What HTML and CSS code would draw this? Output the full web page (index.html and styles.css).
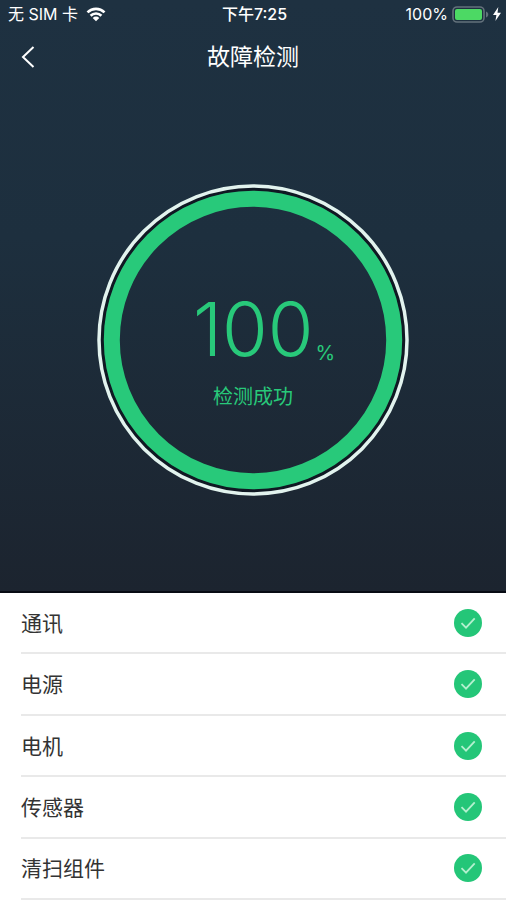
FILE: index.html
```html
<!DOCTYPE html>
<html lang="zh-CN">
<head>
<meta charset="utf-8">
<meta name="viewport" content="width=device-width, initial-scale=1">
<title>故障检测</title>
<link rel="stylesheet" href="styles.css">
</head>
<body>
<svg class="defs" aria-hidden="true">
  <symbol id="check" viewBox="0 0 28 28">
    <circle cx="14" cy="14" r="14" fill="#24c678"/>
    <path d="M7.500 14.200 12 18.700 20.700 9.300" fill="none" stroke="#b4f0cf" stroke-width="1.800"/>
  </symbol>
</svg>
<main class="screen">
  <section class="hero">
    <div class="status">
      <div class="status-left">
        <span>无 SIM 卡</span>
        <svg class="wifi" viewBox="0 0 20 15" aria-hidden="true">
          <path d="M1.5 5.4a12.2 12.2 0 0 1 17 0M4.6 8.7a7.7 7.7 0 0 1 10.8 0" fill="none" stroke="#fff" stroke-width="2.7"/>
          <path d="M6.7 10.9a4.7 4.7 0 0 1 6.6 0L10 14.3z" fill="#fff"/>
        </svg>
      </div>
      <span class="time">下午7:25</span>
      <div class="status-right">
        <span>100%</span>
        <svg class="battery" viewBox="0 0 37 17" aria-hidden="true">
          <rect x="1" y="1" width="31" height="15" rx="4" fill="none" stroke="#63717b" stroke-width="1.6"/>
          <rect x="3" y="3" width="27" height="11" rx="2" fill="#4cd964"/>
          <path d="M34 5.5c3 1 3 5 0 6z" fill="#63717b"/>
        </svg>
        <svg class="bolt" viewBox="0 0 8 14" aria-hidden="true"><path d="M5.3 0 0 8h3.4l-1 6L8 5.7H4.5z" fill="#fff"/></svg>
      </div>
    </div>
    <header class="nav">
      <button class="back" type="button" aria-label="返回">
        <svg viewBox="0 0 14 22" aria-hidden="true"><path d="M12.500 1 2 11l10.500 10" fill="none" stroke="#fff" stroke-width="2"/></svg>
      </button>
      <h1>故障检测</h1>
    </header>
    <div class="gauge">
      <svg class="ring" viewBox="0 0 312 312" aria-hidden="true">
        <circle cx="156" cy="156" r="151" fill="none" stroke="#101823" stroke-width="4"/>
        <circle cx="156" cy="156" r="154" fill="none" stroke="#e2f3ee" stroke-width="3.500"/>
        <circle cx="156" cy="156" r="141.200" fill="none" stroke="#28c97a" stroke-width="16"/>
      </svg>
      <div class="reading">
        <p class="value"><span>100</span><span class="unit">%</span></p>
        <p class="result">检测成功</p>
      </div>
    </div>
  </section>
  <ul class="checks">
    <li><span class="label">通讯</span><svg class="tick" role="img" aria-label="正常"><use href="#check"/></svg></li>
    <li><span class="label">电源</span><svg class="tick" role="img" aria-label="正常"><use href="#check"/></svg></li>
    <li><span class="label">电机</span><svg class="tick" role="img" aria-label="正常"><use href="#check"/></svg></li>
    <li><span class="label">传感器</span><svg class="tick" role="img" aria-label="正常"><use href="#check"/></svg></li>
    <li><span class="label">清扫组件</span><svg class="tick" role="img" aria-label="正常"><use href="#check"/></svg></li>
  </ul>
</main>
</body>
</html>
```
FILE: styles.css
```css
* {
  box-sizing: border-box;
}

body,
h1,
p,
ul {
  margin: 0;
  padding: 0;
}

body {
  font-family: Inter, "Noto Sans CJK SC", sans-serif;
  background: #fff;
}

.defs {
  position: absolute;
  width: 0;
  height: 0;
}

.screen {
  display: flex;
  flex-direction: column;
  min-height: 100vh;
}

.hero {
  padding-bottom: 95px;
  color: #fff;
  background: linear-gradient(#1e3141, #1d2f3e 40%, #1c242f);
  border-bottom: 2px solid #070b14;
}

.status {
  display: grid;
  grid-template-columns: 1fr auto 1fr;
  align-items: center;
  height: 28px;
  padding: 0 5px 0 8px;
  font-size: 16px;
  line-height: 28px;
  white-space: nowrap;
}

.status-left,
.status-right {
  display: flex;
  align-items: center;
}

.status-left {
  gap: 8px;
}

.status-right {
  gap: 4px;
  justify-content: flex-end;
}

.time {
  font-weight: 500;
}

.wifi {
  width: 20px;
  height: 15px;
}

.battery {
  width: 37px;
  height: 17px;
}

.bolt {
  width: 8px;
  height: 14px;
}

.nav {
  display: grid;
  grid-template-columns: 56px 1fr 56px;
  align-items: center;
  height: 58px;
}

.nav h1 {
  font-size: 23px;
  font-weight: 400;
  line-height: 32px;
  text-align: center;
}

.back {
  display: flex;
  align-items: center;
  height: 44px;
  padding: 0 0 0 21px;
  background: none;
  border: 0;
}

.back svg {
  width: 14px;
  height: 22px;
}

.gauge {
  display: grid;
  place-items: center;
  margin-top: 98px;
}

.gauge > * {
  grid-area: 1 / 1;
}

.ring {
  width: 312px;
  height: 312px;
}

.reading {
  padding-top: 20px;
  color: #28c97a;
  text-align: center;
}

.value {
  display: flex;
  align-items: flex-end;
  justify-content: center;
  gap: 2px;
  padding-left: 22px;
  font-size: 74px;
  font-weight: 300;
  line-height: 80px;
}

.unit {
  font-size: 20px;
  font-weight: 400;
  line-height: 32px;
}

.result {
  margin-top: 14px;
  font-size: 20px;
  line-height: 28px;
}

.checks {
  display: flex;
  flex: 1;
  flex-direction: column;
  padding-left: 21px;
  list-style: none;
}

.checks li {
  display: flex;
  flex: 1 0 60px;
  align-items: center;
  justify-content: space-between;
  padding-right: 24px;
  font-size: 21px;
  line-height: 32px;
  color: #333;
  border-bottom: 2px solid #e9e9e9;
}

.label {
  padding-top: 2px;
}

.tick {
  width: 28px;
  height: 28px;
}
```
